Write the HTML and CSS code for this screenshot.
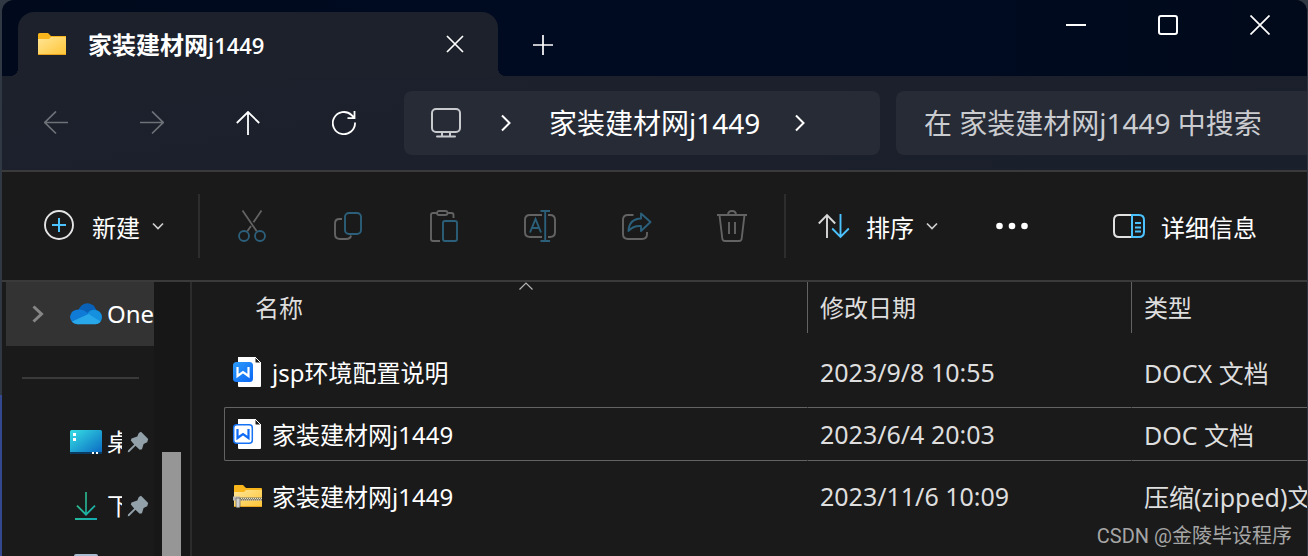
FILE: index.html
```html
<!DOCTYPE html>
<html lang="zh-CN">
<head>
<meta charset="utf-8">
<title>家装建材网j1449</title>
<link rel="stylesheet" href="styles.css">
</head>
<body>
<svg class="defs" aria-hidden="true">
  <defs>
    <linearGradient id="folder" x1="0" y1="0" x2="1" y2="1"><stop offset="0" stop-color="#ffe596"/><stop offset="1" stop-color="#ffc536"/></linearGradient>
    <linearGradient id="desk" x1="0" y1="0" x2="1" y2="1"><stop offset="0" stop-color="#35dfe4"/><stop offset="1" stop-color="#0a67c2"/></linearGradient>
    <linearGradient id="down" x1="0" y1="0" x2="1" y2="1" gradientUnits="objectBoundingBox"><stop offset="0" stop-color="#35c481"/><stop offset="1" stop-color="#12a9b5"/></linearGradient>
    <linearGradient id="wps" x1="0" y1="0" x2="1" y2="1"><stop offset="0" stop-color="#2c9cfb"/><stop offset="1" stop-color="#0a66f5"/></linearGradient>
    <symbol id="chev" viewBox="0 0 12 8"><path d="M1 1.5 6 6.5l5-5" fill="none" stroke="#cfcfcf" stroke-width="1.7"/></symbol>
    <symbol id="crumb" viewBox="0 0 12 18"><path d="m2 1.500 7.500 7.500L2 16.500" fill="none" stroke="#fff" stroke-width="2"/></symbol>
    <symbol id="pin" viewBox="0 0 22 22"><path d="M14 .8 21.200 8l-1 3.300-3.600 1.600-1.600 5.300-2.300.6-4.200-4L2.300 21 .8 21.200 1 19.600l6.200-6.200-3.400-3.900.7-2.100 5.800-1.800L11.800 2z" fill="#92a1a9"/></symbol>
  </defs>
</svg>
<div class="window">
  <header class="titlebar">
    <div class="tab">
      <svg class="tab-icon" width="28" height="22" viewBox="0 0 28 22"><path d="M0 1.500Q0 0 1.500 0H10l3 3h15v6H0z" fill="#f8b51c"/><path d="M0 6h11l2-2h14q1 0 1 1v16q0 1-1 1H1q-1 0-1-1z" fill="url(#folder)"/><path d="M0 21.500h28" stroke="#e9a21c"/></svg>
      <h1 class="tab-title">家装建材网<span class="tab-latin">j1449</span></h1>
      <button class="tab-close" aria-label="关闭标签页"><svg width="18" height="18" viewBox="0 0 18 18"><path d="m1 1 16 16M17 1 1 17" stroke="#fff" stroke-width="1.700"/></svg></button>
    </div>
    <button class="tab-new" aria-label="新标签页"><svg width="20" height="20" viewBox="0 0 20 20"><path d="M10 0v20M0 10h20" stroke="#fff" stroke-width="1.700"/></svg></button>
    <div class="caption">
      <button aria-label="最小化"><svg width="20" height="20" viewBox="0 0 20 20"><path d="M0 10h20" stroke="#fff" stroke-width="2"/></svg></button>
      <button aria-label="最大化"><svg width="20" height="20" viewBox="0 0 20 20"><rect x="1" y="1" width="18" height="18" rx="2" fill="none" stroke="#fff" stroke-width="2"/></svg></button>
      <button aria-label="关闭"><svg width="20" height="20" viewBox="0 0 20 20"><path d="m.5.500 19 19m0-19-19 19" stroke="#fff" stroke-width="1.700"/></svg></button>
    </div>
  </header>

  <nav class="navbar" aria-label="导航">
    <button class="nav-btn" aria-label="后退" disabled><svg width="24" height="24" viewBox="0 0 24 24"><path d="M24 11.500H1M12 .5.800 11.500 12 22.500" fill="none" stroke="#6d7178" stroke-width="1.700"/></svg></button>
    <button class="nav-btn" aria-label="前进" disabled><svg width="24" height="24" viewBox="0 0 24 24"><path d="M0 11.500h23M12 .5 23.200 11.500 12 22.500" fill="none" stroke="#6d7178" stroke-width="1.700"/></svg></button>
    <button class="nav-btn" aria-label="上移"><svg width="24" height="24" viewBox="0 0 24 24"><path d="M12 24V1M.8 12 12 1l11.200 11" fill="none" stroke="#fff" stroke-width="1.800"/></svg></button>
    <button class="nav-btn" aria-label="刷新"><svg width="24" height="24" viewBox="0 0 24 24"><path d="M23 11.500A11.100 11.100 0 1 1 19.500 4L22.500 7M22.500 0v7.200H15.500" fill="none" stroke="#fff" stroke-width="1.800"/></svg></button>
    <div class="address">
      <svg width="30" height="30" viewBox="0 0 30 30"><rect x="1" y="1" width="28" height="23" rx="4" fill="none" stroke="#c8cace" stroke-width="2"/><path d="M6 28.500h18" stroke="#c8cace" stroke-width="2" stroke-linecap="round"/><path d="M11 24v4M19 24v4" stroke="#c8cace" stroke-width="2"/></svg>
      <svg class="crumb-a" width="12" height="18"><use href="#crumb"/></svg>
      <a class="crumb-text" href="#">家装建材网j1449</a>
      <svg width="12" height="18"><use href="#crumb"/></svg>
    </div>
    <input class="search" type="text" aria-label="搜索" placeholder="在 家装建材网j1449 中搜索">
  </nav>

  <div class="toolbar" role="toolbar" aria-label="命令">
    <button class="cmd cmd-new">
      <svg width="32" height="32" viewBox="0 0 32 32"><circle cx="16" cy="15" r="14" fill="none" stroke="#e4e4e4" stroke-width="1.900"/><path d="M16 8v14M9 15h14" stroke="#4cc2ff" stroke-width="2"/></svg>
      <span>新建</span>
      <svg width="12" height="8"><use href="#chev"/></svg>
    </button>
    <div class="rule"></div>
    <div class="icon-group">
      <button class="icon-btn" aria-label="剪切" disabled><svg width="32" height="32" viewBox="0 0 32 32" fill="none" stroke-width="1.800"><path d="m6.500.5 14.200 20.800M25.500.5l-8 11.800M15 16l-3.700 5.300" stroke="#636363"/><circle cx="8" cy="26" r="5" stroke="#2b5f7a"/><circle cx="24" cy="26" r="5" stroke="#2b5f7a"/></svg></button>
      <button class="icon-btn" aria-label="复制" disabled><svg width="32" height="32" viewBox="0 0 32 32" fill="none" stroke-width="1.900"><path d="M10 9H7.500Q3 9 3 13.500V24q0 5 5 5h6q4.500 0 5-3.500" stroke="#636363"/><rect x="13" y="3" width="16" height="21" rx="4" stroke="#2b5f7a"/></svg></button>
      <button class="icon-btn" aria-label="粘贴" disabled><svg width="32" height="32" viewBox="0 0 32 32" fill="none" stroke-width="1.900"><path d="M8.500 3H5Q3 3 3 5v24q0 2 2 2h7M19 3h4.500q2 0 2 2v3" stroke="#636363"/><rect x="9" y="1" width="10.500" height="4" rx="2" stroke="#636363"/><rect x="15" y="11" width="14" height="20" rx="2" stroke="#2b5f7a"/></svg></button>
      <button class="icon-btn" aria-label="重命名" disabled><svg width="32" height="32" viewBox="0 0 32 32" fill="none" stroke-width="1.900"><path d="M18 5H6Q1 5 1 10v12q0 5 5 5h12M24 5h2q5 0 5 5v12q0 5-5 5h-2" stroke="#636363"/><path d="M16.500 1H26M16.500 31H26M21.200 1v30M6 22.500 11.500 9 17 22.500M8 18h7" stroke="#2b5f7a"/></svg></button>
      <button class="icon-btn" aria-label="共享" disabled><svg width="32" height="32" viewBox="0 0 32 32" fill="none" stroke-width="1.900"><path d="M13.500 5H8Q3 5 3 10v14q0 5 5 5h14q5 0 5-5v-2" stroke="#636363"/><path d="M21 3.500 30.500 12 21 21v-5q-8-.5-12.500 5Q9 9 21 8.500z" stroke="#2b5f7a" stroke-linejoin="round"/></svg></button>
      <button class="icon-btn" aria-label="删除" disabled><svg width="32" height="32" viewBox="0 0 32 32" fill="none" stroke="#636363" stroke-width="1.900"><path d="M1 5h30M3.500 5 6.300 28.500Q6.500 31 9 31h14q2.500 0 2.700-2.500L28.500 5M12 5q0-4 4-4t4 4M13 12v12M19 12v12"/></svg></button>
    </div>
    <div class="rule"></div>
    <button class="cmd cmd-sort">
      <svg width="32" height="32" viewBox="0 0 32 32" fill="none" stroke-width="1.900"><path d="M9 28V5M.8 13.500 9 5.200l8.200 8.300" stroke="#d8d8d8"/><path d="M22.500 4v23M14.200 18.500l8.300 8.300 8.300-8.300" stroke="#4cc2ff"/></svg>
      <span>排序</span>
      <svg width="12" height="8"><use href="#chev"/></svg>
    </button>
    <button class="cmd cmd-more" aria-label="查看更多"><svg width="32" height="8" viewBox="0 0 32 8" fill="#fff"><circle cx="3.500" cy="4" r="3.300"/><circle cx="16" cy="4" r="3.300"/><circle cx="28.500" cy="4" r="3.300"/></svg></button>
    <button class="cmd cmd-details">
      <svg width="32" height="32" viewBox="0 0 32 32" fill="none" stroke-width="2"><path d="M18 5H6Q1 5 1 10v12q0 5 5 5h12" stroke="#e0e0e0"/><path d="M19 5h7q5 0 5 5v12q0 5-5 5h-7zM22 13h6M22 17.500h6M22 21.500h6" stroke="#4cc2ff"/></svg>
      <span>详细信息</span>
    </button>
  </div>

  <div class="body">
    <aside class="sidebar">
      <ul class="tree">
        <li class="node node-active">
          <svg width="12" height="18" viewBox="0 0 12 18"><path d="m1.500 1.500 8 7.500-8 7.500" fill="none" stroke="#868686" stroke-width="3"/></svg>
          <svg class="node-icon" width="32" height="32" viewBox="0 0 32 32"><path d="M8 13Q11 5 18 5.200q6 .5 8.500 7L22 20H8z" fill="#0a62b8"/><path d="M7.500 26.200Q0 25 0 18.500 1 11.500 9 11.500q4-.5 8 3L25 20 12 26z" fill="#0f7bd6"/><path d="M18 15q3-4 8-3 6 1.500 6 7.500-.5 6.500-7 6.700L18 20z" fill="#1490df"/><path d="M2 23.500 18.500 16l12 7.500q-2 2.800-6 2.800H8Q4 26.300 2 23.500z" fill="#28a8ea"/></svg>
          <span class="node-text">One</span>
        </li>
        <li class="divider"></li>
        <li class="node">
          <svg class="node-icon" width="32" height="24" viewBox="0 0 32 24"><rect width="32" height="24" rx="1.500" fill="url(#desk)"/><path d="M0 22h32v1q0 1-1 1H1q-1 0-1-1z" fill="#0b3a62"/><path d="M3 3h3v3H3zM3 8h3v3H3zM22 22h2v2h-2zM26 22h2v2h-2z" fill="#fff"/></svg>
          <span class="node-text node-cut">桌</span>
          <svg class="pin" width="22" height="22"><use href="#pin"/></svg>
        </li>
        <li class="node">
          <svg class="node-icon" width="32" height="28" viewBox="0 0 32 28"><path d="M15.200 0h1.600v20.500l7.600-7.500 1.200 1.200L16 24l-9.600-9.800L7.600 13l7.600 7.500zM5 26h22v2H5z" fill="url(#down)"/></svg>
          <span class="node-text node-cut">下</span>
          <svg class="pin" width="22" height="22"><use href="#pin"/></svg>
        </li>
        <li class="node">
          <svg class="node-icon" width="32" height="32" viewBox="0 0 32 32"><rect x="4" width="24" height="32" rx="2" fill="#a9bbd0"/><path d="M6 2h20v28H6z" fill="#d8e2ee"/></svg>
        </li>
      </ul>
      <div class="scroll"><div class="thumb"></div></div>
    </aside>
    <main class="files">
      <svg class="sort-mark" width="14" height="8" viewBox="0 0 14 8"><path d="m.5 7.500 6.500-6.500 6.500 6.500" fill="none" stroke="#b5b5b5" stroke-width="1.200"/></svg>
      <table class="list">
        <colgroup><col class="col-name"><col class="col-date"><col></colgroup>
        <thead>
          <tr><th><div class="head head-name">名称</div></th><th><div class="head">修改日期</div></th><th><div class="head">类型</div></th></tr>
        </thead>
        <tbody>
          <tr>
            <td><div class="cell name"><svg width="30" height="32" viewBox="0 0 30 32"><path d="M6 1h17l6 6v23q0 1-1 1H7q-1 0-1-1z" fill="#fff"/><path d="M23 1v5q0 1 1 1h5z" fill="#1b1b1b" stroke="#fff" stroke-width="1"/><rect x="1" y="6" width="20" height="20" rx="3.500" fill="url(#wps)"/><path d="M5.500 11v9l5.500-4 5.500 4v-9" fill="none" stroke="#fff" stroke-width="2.200"/></svg>jsp环境配置说明</div></td>
            <td><div class="cell">2023/9/8 10:55</div></td>
            <td><div class="cell">DOCX 文档</div></td>
          </tr>
          <tr class="focused">
            <td><div class="cell name"><svg width="30" height="32" viewBox="0 0 30 32"><path d="M6 1h17l6 6v23q0 1-1 1H7q-1 0-1-1z" fill="#fff"/><path d="M23 1v5q0 1 1 1h5z" fill="#1b1b1b" stroke="#fff" stroke-width="1"/><rect x="1.700" y="6.700" width="18.600" height="18.600" rx="3" fill="#fff" stroke="#1672f5" stroke-width="1.500"/><path d="M5.500 11v9l5.500-4 5.500 4v-9" fill="none" stroke="#0f6af5" stroke-width="2.200"/></svg>家装建材网j1449</div></td>
            <td><div class="cell">2023/6/4 20:03</div></td>
            <td><div class="cell">DOC 文档</div></td>
          </tr>
          <tr>
            <td><div class="cell name"><svg width="30" height="32" viewBox="0 0 30 32"><path d="M2 6q0-1 1-1h8l3 3h15q1 0 1 1v6H2z" fill="#f8b51c"/><path d="M2 12h10l2-2h15q1 0 1 1v15q0 1-1 1H3q-1 0-1-1z" fill="url(#folder)"/><path d="M2 26.500h28" stroke="#e9a21c"/><path d="M6 19h24" stroke="#7d7663" stroke-width="3"/><path d="M7 18.500h23M8 20h22" stroke="#e8e2cf" stroke-dasharray="1 1"/><path d="M1 16.500h7v4H1z" fill="#b8b8b8"/><path d="M4 18h4v9q-2 1.500-4 0z" fill="#d0d0d0" stroke="#77705f" stroke-width=".8"/></svg>家装建材网j1449</div></td>
            <td><div class="cell">2023/11/6 10:09</div></td>
            <td><div class="cell">压缩(zipped)文</div></td>
          </tr>
        </tbody>
      </table>
    </main>
  </div>
  <div class="watermark">CSDN @金陵毕设程序</div>
</div>
</body>
</html>
```
FILE: styles.css
```css
* { box-sizing: border-box; }

body {
  margin: 0;
  background: linear-gradient(#303844 0 395px, #33488f 395px);
  font-family: "Noto Sans", "Noto Sans CJK SC", sans-serif;
  color: #fff;
}

button {
  display: flex;
  align-items: center;
  justify-content: center;
  margin: 0;
  padding: 0;
  border: 0;
  background: none;
  color: inherit;
  font: inherit;
}

svg { display: block; flex: none; }

.defs { position: absolute; width: 0; height: 0; }

.window {
  position: relative;
  display: flex;
  flex-direction: column;
  height: 100vh;
  margin-left: 2px;
  border-right: 1px solid #30353f;
  border-radius: 12px 12px 0 0;
  overflow: hidden;
  background: #1a1a1a;
}

/* Title bar */
.titlebar {
  display: flex;
  align-items: flex-end;
  height: 76px;
  padding-left: 16px;
  background: linear-gradient(90deg, #000a1c, #000a20 30%, #000a20 75%, #000a1a);
}

.tab {
  position: relative;
  display: flex;
  align-items: center;
  width: 480px;
  height: 64px;
  padding: 0 34px 0 20px;
  border-radius: 16px 16px 0 0;
  background: #1c212c;
}

.tab::before,
.tab::after {
  content: "";
  position: absolute;
  bottom: 0;
  width: 8px;
  height: 8px;
}

.tab::before { right: 100%; background: radial-gradient(circle at 0 0, transparent 8px, #1c212c 8px); }
.tab::after { left: 100%; background: radial-gradient(circle at 100% 0, transparent 8px, #1c212c 8px); }

.tab-icon { margin-right: 22px; }

.tab-title {
  flex: 1;
  margin: 0;
  padding-top: 2px;
  font-size: 24px;
  font-weight: 700;
  line-height: 32px;
}

.tab-latin { font-family: "Open Sans", sans-serif; font-size: 22px; font-weight: 600; }

.tab-new { width: 90px; height: 62px; }

.caption { display: flex; align-self: flex-start; margin: 0 1px 0 auto; }
.caption button { width: 92px; height: 50px; }

/* Navigation */
.navbar {
  display: flex;
  align-items: center;
  height: 94px;
  padding-left: 6px;
  background: linear-gradient(170deg, #1c212c, #1a1f2c);
}

.nav-btn { width: 96px; height: 64px; flex: none; }

.address {
  display: flex;
  flex: 1 1 476px;
  align-items: center;
  height: 64px;
  margin: 0 16px 0 12px;
  padding-left: 27px;
  border-radius: 8px;
  background: #262b36;
}

.crumb-a { margin-left: 39px; }

.crumb-text {
  margin: 0 34px 0 37px;
  color: #fff;
  font-size: 28px;
  line-height: 40px;
  text-decoration: none;
  white-space: nowrap;
}

.search {
  flex: 1 1 411px;
  min-width: 0;
  height: 64px;
  padding: 0 0 0 28px;
  border: 0;
  border-radius: 8px 0 0 8px;
  background: #262b36;
  font: 28px "Noto Sans", "Noto Sans CJK SC", sans-serif;
}

.search::placeholder { color: #cbccd0; opacity: 1; }

/* Command bar */
.toolbar {
  display: flex;
  align-items: center;
  height: 112px;
  border-top: 2px solid #3a3a3a;
  border-bottom: 2px solid #3a3a3a;
}

.cmd { height: 64px; font-size: 24px; white-space: nowrap; }
.cmd-new { margin: 0 34px 0 41px; }
.cmd-new span { margin: 0 12px 0 17px; }
.cmd-sort { margin-left: 32px; }
.cmd-sort span { margin: 0 12px 0 16px; }
.cmd-more { margin-left: 58px; }
.cmd-details { gap: 16px; margin: 0 50px 0 auto; }

.rule { width: 2px; height: 64px; background: #2d2d2d; }

.icon-group { display: flex; padding: 0 4px; }
.icon-btn { width: 96px; height: 64px; }

/* Body */
.body { display: flex; flex: 1; min-height: 0; }

.sidebar {
  display: flex;
  flex: none;
  width: 190px;
  padding-left: 4px;
  border-right: 2px solid #2c2c2c;
  overflow: hidden;
}

.tree { width: 148px; margin: 0; padding: 0; list-style: none; }

.node {
  display: flex;
  align-items: center;
  height: 64px;
  padding-left: 64px;
  overflow: hidden;
}

.node-active { gap: 26px; padding-left: 26px; background: #333; }

.node-text { margin-left: 5px; font-size: 24px; line-height: 36px; }
.node-active .node-text { margin-left: -21px; }
.node-cut { width: 15px; overflow: hidden; }
.pin { margin-left: 5px; }

.divider { height: 64px; padding: 31px 15px 0 16px; }
.divider::before { content: ""; display: block; height: 2px; background: #3a3a3a; }

.scroll { flex: 1; padding: 170px 9px 0 8px; background: #171717; }
.thumb { height: 100%; background: #969696; }

.files { position: relative; flex: 1; min-width: 0; padding-left: 32px; overflow: hidden; }

.sort-mark { position: absolute; left: 327px; top: 0; }

.list { width: 100%; border-collapse: collapse; table-layout: fixed; }
.col-name { width: 583px; }
.col-date { width: 324px; }

th, td { padding: 0; text-align: left; font-weight: 400; vertical-align: top; }
th { height: 59px; }
td { height: 62px; padding: 4px 0; }

.head {
  height: 51px;
  padding: 8px 0 0 12px;
  border-left: 1px solid #636363;
  color: #dedede;
  font-size: 24px;
  line-height: 36px;
}

.head-name { padding-left: 30px; border-left-color: transparent; }

.cell {
  display: flex;
  align-items: center;
  height: 54px;
  padding-left: 12px;
  border: solid transparent;
  border-width: 1px 0 1px 1px;
  color: #dedede;
  font-size: 25px;
  white-space: nowrap;
  overflow: hidden;
}

.name { gap: 10px; padding: 0 0 1px 7px; color: #fff; font-size: 24px; }

.focused .cell { border-top-color: #636363; border-bottom-color: #636363; }
.focused .name { border-left-color: #636363; border-radius: 2px 0 0 2px; }

.watermark {
  position: absolute;
  right: 15px;
  bottom: 5px;
  color: #a6a6a6;
  font: 20px/30px Roboto, "Noto Sans CJK SC", sans-serif;
}
```
